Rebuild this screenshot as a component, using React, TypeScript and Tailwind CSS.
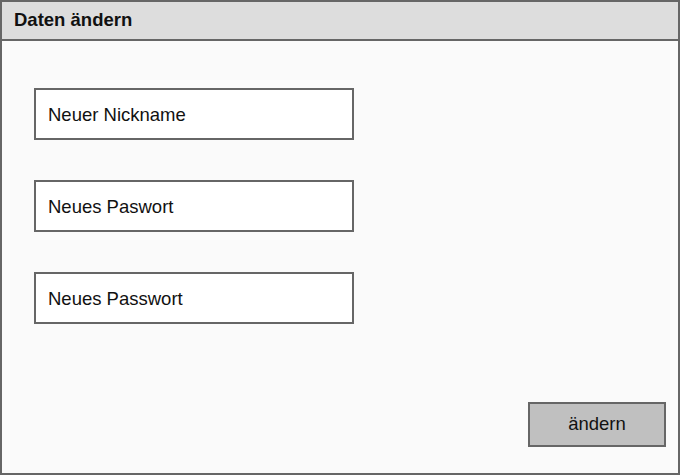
import React from 'react';

const fields = ['Neuer Nickname', 'Neues Paswort', 'Neues Passwort'];

const App: React.FC = () => {
  return (
    <div className="w-[680px] h-[475px] border-2 border-[#666666] bg-[#fafafa] flex flex-col font-['Liberation_Sans',Arial,sans-serif] text-[#111]">
      {/* Header */}
      <div className="h-[39px] shrink-0 border-b-2 border-[#666666] bg-[#dddddd] flex items-center pl-3">
        <span className="text-[18.5px] font-bold leading-none">Daten ändern</span>
      </div>

      {/* Body */}
      <div className="flex-1 flex flex-col pl-8 pt-[47px] pr-3 pb-[26px]">
        <div className="flex flex-col gap-[40px]">
          {fields.map((label) => (
            <div
              key={label}
              className="w-[320px] h-[52px] border-2 border-[#666666] bg-white flex items-center pl-3 pt-[2px]"
            >
              <span className="text-[18.5px] leading-none">{label}</span>
            </div>
          ))}
        </div>

        <div className="mt-auto flex justify-end">
          <button className="w-[138px] h-[45px] border-2 border-[#666666] bg-[#c0c0c0] text-[18.5px] leading-none">
            ändern
          </button>
        </div>
      </div>
    </div>
  );
};

export default App;
